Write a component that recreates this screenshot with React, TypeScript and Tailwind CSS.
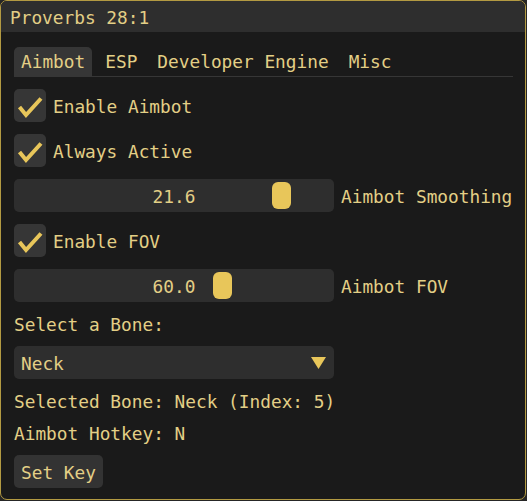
import React from "react";

const FONT = { fontFamily: '"DejaVu Sans Mono", "Liberation Mono", monospace' };

function Check() {
  return (
    <svg width="32" height="33" viewBox="0 0 32 33" className="block">
      <path d="M5.5 18 L12 26 L27 9.5" fill="none" stroke="#e8c65a" strokeWidth="4" strokeLinejoin="miter" strokeLinecap="butt" />
    </svg>
  );
}

function CheckRow({ label }: { label: string }) {
  return (
    <div className="flex items-center h-[33px] gap-[7px]">
      <div className="w-[32px] h-[33px] rounded-[5px] bg-[#363636]">
        <Check />
      </div>
      <span className="pt-[2px] leading-[20px]">{label}</span>
    </div>
  );
}

function Slider({ value, grabLeft, label }: { value: string; grabLeft: number; label: string }) {
  return (
    <div className="flex items-center h-[33px] gap-[7px]">
      <div className="relative w-[320px] h-[33px] rounded-[5px] bg-[#2e2e2e] flex items-center justify-center">
        <div
          className="absolute top-[3px] bottom-[3px] w-[19px] rounded-[6px] bg-[#e8c65a]"
          style={{ left: grabLeft }}
        />
        <span className="relative pt-[2px] leading-[20px]">{value}</span>
      </div>
      <span className="pt-[2px] leading-[20px] whitespace-nowrap">{label}</span>
    </div>
  );
}

export default function App() {
  return (
    <div className="w-[527px] h-[501px] bg-[#262626]" style={FONT}>
      <div className="w-[526px] h-[500px] border border-[#b39a42] rounded-[7px] bg-[#1a1a1a] overflow-hidden flex flex-col text-[17.8px] text-[#e3cf86]">
        <div className="h-[31px] shrink-0 bg-[#2e2e2e] flex items-center pl-[9px] pt-[2px] leading-[20px]">
          Proverbs 28:1
        </div>
        <div className="flex flex-col pl-[13px] pr-[12px] pt-[15px]">
          <div className="flex gap-[6px] h-[30px] border-b border-[#363636] shrink-0">
            <div className="h-[29px] px-[7px] rounded-t-[5px] bg-[#363636] flex items-center leading-[20px]">Aimbot</div>
            <div className="h-[29px] px-[7px] flex items-center leading-[20px]">ESP</div>
            <div className="h-[29px] px-[7px] flex items-center leading-[20px]">Developer Engine</div>
            <div className="h-[29px] px-[7px] flex items-center leading-[20px]">Misc</div>
          </div>
          <div className="flex flex-col gap-[12px] mt-[12px]">
            <CheckRow label="Enable Aimbot" />
            <CheckRow label="Always Active" />
            <Slider value="21.6" grabLeft={258} label="Aimbot Smoothing" />
            <CheckRow label="Enable FOV" />
            <Slider value="60.0" grabLeft={199} label="Aimbot FOV" />
            <div className="h-[20px] leading-[20px] pt-[1px]">Select a Bone:</div>
            <div className="w-[320px] h-[33px] rounded-[5px] bg-[#2e2e2e] flex items-center justify-between pl-[7px] pr-[8px]">
              <span className="pt-[2px] leading-[20px]">Neck</span>
              <svg width="15" height="12" viewBox="0 0 15 12" className="block mt-[1px]">
                <path d="M0 0 L15 0 L7.5 12 Z" fill="#e8c65a" />
              </svg>
            </div>
            <div className="h-[20px] leading-[20px] pt-[1px]">Selected Bone: Neck (Index: 5)</div>
            <div className="h-[20px] leading-[20px] pt-[1px]">Aimbot Hotkey: N</div>
            <div className="self-start h-[33px] px-[7px] rounded-[5px] bg-[#333333] flex items-center">
              <span className="pt-[2px] leading-[20px]">Set Key</span>
            </div>
          </div>
        </div>
      </div>
    </div>
  );
}
